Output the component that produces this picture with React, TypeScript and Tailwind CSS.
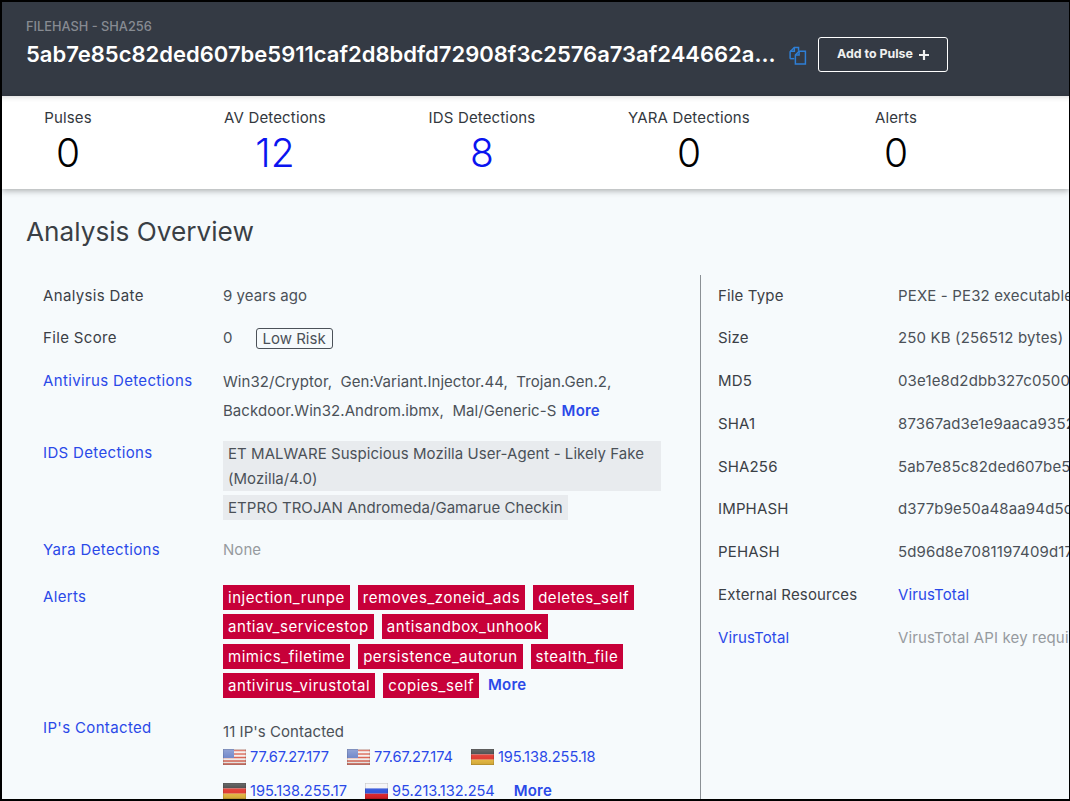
const sans = "font-['Inter',sans-serif]";

function Row({ label, link, h, children }: { label: string; link?: boolean; h: string; children: React.ReactNode }) {
  return (
    <div className={`flex ${h}`}>
      <div className={`w-[180px] shrink-0 text-[15px] leading-[22px] tracking-[0.35px] ${link ? "text-[#2a49e8]" : "text-[#3b4046]"}`}>{label}</div>
      <div className="min-w-0 flex-1 text-[15px] leading-[22px] tracking-[0.05px] text-[#4b5158]">{children}</div>
    </div>
  );
}

function Tag({ children }: { children: React.ReactNode }) {
  return <span className="bg-[#c70039] px-[5px] text-[15px] leading-[25px] tracking-[0.55px] text-white">{children}</span>;
}

function More({ className }: { className?: string }) {
  return <span className={`font-semibold tracking-[0.2px] text-[#2a49e8] ${className ?? ""}`}>More</span>;
}

function Flag({ c }: { c: "us" | "de" | "ru" }) {
  const bands = c === "de" ? ["#3a3a3a", "#e0352b", "#e8b93c"] : ["#f4f4f6", "#2b4fd8", "#e01f26"];
  return (
    <svg width="23" height="16" viewBox="0 0 23 16" className="shrink-0">
      <defs>
        <linearGradient id={`gloss-${c}`} x1="0" y1="0" x2="0" y2="1">
          <stop offset="0" stopColor="#fff" stopOpacity="0.25" />
          <stop offset="0.5" stopColor="#fff" stopOpacity="0.05" />
          <stop offset="1" stopColor="#000" stopOpacity="0.12" />
        </linearGradient>
      </defs>
      {c === "us" ? (
        <>
          <rect width="23" height="16" fill="#f4f0ee" />
          <path d="M0 1.5h23M0 5h23M0 8.5h23M0 12h23M0 15h23" stroke="#d9604f" strokeWidth="1.6" />
          <rect width="11" height="9" fill="#6f86c9" />
        </>
      ) : (
        <>
          <rect width="23" height="5.4" fill={bands[0]} />
          <rect y="5.4" width="23" height="5.3" fill={bands[1]} />
          <rect y="10.7" width="23" height="5.3" fill={bands[2]} />
        </>
      )}
      <rect width="23" height="16" fill={`url(#gloss-${c})`} />
      <rect x="0.25" y="0.25" width="22.5" height="15.5" fill="none" stroke="#000" strokeOpacity="0.22" strokeWidth="0.5" />
    </svg>
  );
}

function Ip({ c, ip }: { c: "us" | "de" | "ru"; ip: string }) {
  return (
    <span className="flex items-center gap-[4px] text-[14.6px] tracking-[-0.05px] text-[#2a49e8]">
      <Flag c={c} />
      {ip}
    </span>
  );
}

const stats = [
  { label: "Pulses", value: "0" },
  { label: "AV Detections", value: "12", blue: true },
  { label: "IDS Detections", value: "8", blue: true },
  { label: "YARA Detections", value: "0" },
  { label: "Alerts", value: "0" },
];

const info = [
  ["File Type", "PEXE - PE32 executable (GUI) Intel 80386"],
  ["Size", "250 KB (256512 bytes)"],
  ["MD5", "03e1e8d2dbb327c0500c4a1b"],
  ["SHA1", "87367ad3e1e9aaca9352b7c1"],
  ["SHA256", "5ab7e85c82ded607be5911caf2"],
  ["IMPHASH", "d377b9e50a48aa94d5c1e0f3"],
  ["PEHASH", "5d96d8e7081197409d17a2c4"],
];

export default function App() {
  return (
    <div className={`h-[801px] w-[1070px] overflow-hidden border-2 border-r border-black bg-[#f6fafc] ${sans}`}>
      <header className="flex h-[94px] items-start bg-[#343a44] pl-[24px] pt-[17px]">
        <div className="w-[752px] shrink-0">
          <div className="text-[12.8px] font-medium leading-[16px] text-[#878b92]">FILEHASH - SHA256</div>
          <div className="mt-[5px] truncate text-[22px] font-semibold leading-[28px] text-white">
            5ab7e85c82ded607be5911caf2d8bdfd72908f3c2576a73af244662a46bd71c0
          </div>
        </div>
        <svg width="19" height="19" viewBox="0 0 18 18" fill="none" stroke="#2e7fd6" strokeWidth="1.4" className="ml-[10px] mt-[27px] shrink-0">
          <path d="M2 12V5.5L6 1.5h4v3" />
          <path d="M6 1.5V5H2" />
          <path d="M2 12h4" />
          <path d="M7 8.5l3.5-3.5H16.5v12H7z" />
          <path d="M10.5 5v3.5H7" />
        </svg>
        <button className="ml-[11px] mt-[18px] flex h-[35px] w-[130px] items-center justify-center gap-[6px] rounded-[3px] border border-white text-[12.4px] font-bold text-[#f0f0f0]">
          Add to Pulse
          <svg width="10" height="10" viewBox="0 0 10 10" stroke="#f0f0f0" strokeWidth="2.2">
            <path d="M5 0v10M0 5h10" />
          </svg>
        </button>
      </header>

      <section className="flex h-[93px] gap-[75px] bg-white pt-[12px] shadow-[inset_0_6px_6px_-6px_rgba(0,0,0,0.2),0_2px_6px_rgba(0,0,0,0.3)]">
        {stats.map((s) => (
          <div key={s.label} className="flex w-[132px] shrink-0 flex-col items-center">
            <div className="whitespace-nowrap text-[15px] leading-[20px] tracking-[0.15px] text-[#33383e]">{s.label}</div>
            <div className={`mt-[2px] text-[39px] font-light leading-[46px] ${s.blue ? "text-[#0a14f0]" : "text-black"}`}>{s.value}</div>
          </div>
        ))}
      </section>

      <h1 className="ml-[24px] mt-[25px] text-[26.2px] leading-[36px] text-[#3a3f45]">Analysis Overview</h1>

      <div className="mt-[25px] flex">
        <div className="ml-[41px] w-[618px] shrink-0 pt-[10px]">
          <Row label="Analysis Date" h="h-[42px]">9 years ago</Row>
          <Row label="File Score" h="h-[43px]">
            <div className="flex items-center gap-[23px]">
              0
              <span className="rounded-[3px] border border-[#4b5158] px-[6px] text-[15px] leading-[19px] tracking-normal">Low Risk</span>
            </div>
          </Row>
          <Row label="Antivirus Detections" link h="h-[72px]">
            <div className="-mt-[3px] leading-[29px]">
              Win32/Cryptor,&nbsp; Gen:Variant.Injector.44,&nbsp; Trojan.Gen.2,
              <br />
              Backdoor.Win32.Androm.ibmx,&nbsp; Mal/Generic-S <More className="ml-[1px]" />
            </div>
          </Row>
          <Row label="IDS Detections" link h="h-[97px]">
            <div className="-mt-[1px] flex flex-col items-start gap-[4px]">
              <div className="w-full bg-[#e8ebee] px-[5px] leading-[25px]">
                ET MALWARE Suspicious Mozilla User-Agent - Likely Fake (Mozilla/4.0)
              </div>
              <div className="bg-[#e8ebee] px-[5px] leading-[25px]">ETPRO TROJAN Andromeda/Gamarue Checkin</div>
            </div>
          </Row>
          <Row label="Yara Detections" link h="h-[47px]">
            <span className="text-[#969a9f]">None</span>
          </Row>
          <Row label="Alerts" link h="h-[131px]">
            <div className="-mt-[1px] flex flex-col gap-[4.3px]">
              <div className="flex gap-[8px]">
                <Tag>injection_runpe</Tag>
                <Tag>removes_zoneid_ads</Tag>
                <Tag>deletes_self</Tag>
              </div>
              <div className="flex gap-[8px]">
                <Tag>antiav_servicestop</Tag>
                <Tag>antisandbox_unhook</Tag>
              </div>
              <div className="flex gap-[8px]">
                <Tag>mimics_filetime</Tag>
                <Tag>persistence_autorun</Tag>
                <Tag>stealth_file</Tag>
              </div>
              <div className="flex items-center gap-[8px]">
                <Tag>antivirus_virustotal</Tag>
                <Tag>copies_self</Tag>
                <More className="ml-[1px]" />
              </div>
            </div>
          </Row>
          <Row label="IP's Contacted" link h="h-[80px]">
            <div className="pt-[5px] leading-[20px]">11 IP's Contacted</div>
            <div className="mt-[4px] flex gap-[18px]">
              <Ip c="us" ip="77.67.27.177" />
              <Ip c="us" ip="77.67.27.174" />
              <Ip c="de" ip="195.138.255.18" />
            </div>
            <div className="mt-[12px] flex gap-[18px]">
              <Ip c="de" ip="195.138.255.17" />
              <Ip c="ru" ip="95.213.132.254" />
              <More className="ml-[1px]" />
            </div>
          </Row>
        </div>
        <div className="ml-[39px] h-[600px] w-px shrink-0 bg-[#8b9095]" />
        <div className="ml-[17px] w-[352px] shrink-0 overflow-hidden pt-[9.7px]">
          {info.map(([k, v]) => (
            <div key={k} className="flex h-[42.75px] whitespace-nowrap text-[15px] leading-[22px] tracking-[0.15px]">
              <div className="w-[180px] shrink-0 text-[#3b4046]">{k}</div>
              <div className="text-[#4b5158]">{v}</div>
            </div>
          ))}
          <div className="flex h-[42.75px] whitespace-nowrap text-[15px] leading-[22px] tracking-[0.15px]">
            <div className="w-[180px] shrink-0 text-[#3b4046]">External Resources</div>
            <div className="text-[#2a49e8]">VirusTotal</div>
          </div>
          <div className="flex h-[42.75px] whitespace-nowrap text-[15px] leading-[22px] tracking-[0.15px]">
            <div className="w-[180px] shrink-0 text-[#2a49e8]">VirusTotal</div>
            <div className="text-[#969a9f]">VirusTotal API key required</div>
          </div>
        </div>
      </div>
    </div>
  );
}
